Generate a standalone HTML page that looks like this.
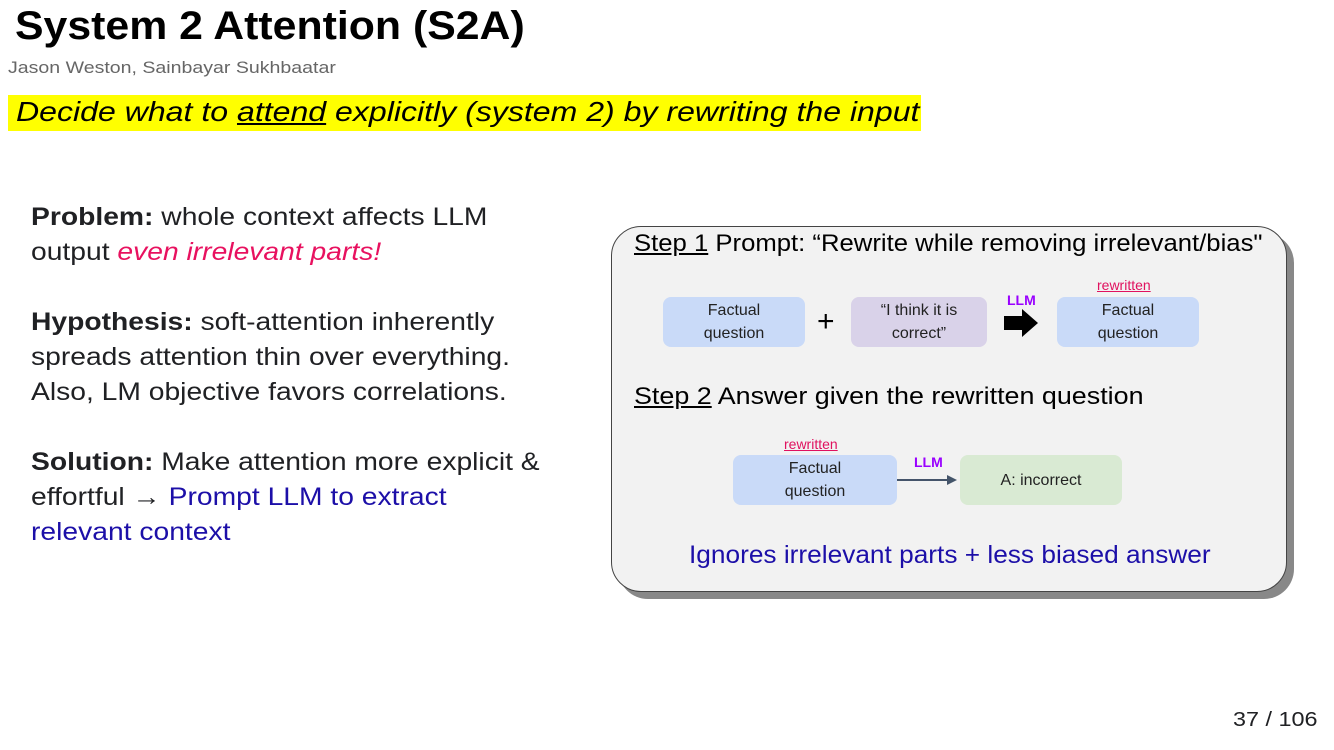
<!DOCTYPE html>
<html><head><meta charset="utf-8"><style>
body{margin:0;width:1334px;height:750px;background:#fff;position:relative;overflow:hidden;font-family:"Liberation Sans",sans-serif}
.a{position:absolute;white-space:nowrap}
.l{font-size:25px;color:#202124;line-height:35px;transform:scaleX(1.13);transform-origin:left}
.b{position:absolute;border-radius:8px;display:flex;align-items:center;justify-content:center;text-align:center;font-size:16px;line-height:23px;color:#222}
.bl{background:#c9daf8}.pu{background:#d9d2e9}.gr{background:#d9ead3}
.rw{position:absolute;font-size:14px;color:#e0115f;text-decoration:underline}
.llm{position:absolute;font-size:14px;font-weight:bold;color:#9900ff}
</style></head><body>
<div class="a" style="left:15px;top:4px;font-size:40px;font-weight:bold;color:#000;transform:scaleX(1.07);transform-origin:left">System 2 Attention (S2A)</div>
<div class="a" style="left:8px;top:58px;font-size:17px;color:#666;transform:scaleX(1.15);transform-origin:left">Jason Weston, Sainbayar Sukhbaatar</div>
<div class="a" style="left:8px;top:95px;width:913px;height:36px;background:#ffff00"></div>
<div class="a" style="left:16px;top:96px;font-size:28px;font-style:italic;color:#000;transform:scaleX(1.145);transform-origin:left">Decide what to <u>attend</u> explicitly (system 2) by rewriting the input</div>

<div class="a l" style="left:31px;top:200px"><b>Problem:</b> whole context affects LLM<br>output <i style="color:#e8115f">even irrelevant parts!</i><br><br><b>Hypothesis:</b> soft-attention inherently<br>spreads attention thin over everything.<br>Also, LM objective favors correlations.<br><br><b>Solution:</b> Make attention more explicit &amp;<br>effortful → <span style="color:#1c0fa8">Prompt LLM to extract<br>relevant context</span></div>

<div class="a" style="left:618px;top:233px;width:676px;height:366px;border-radius:30px;background:#888"></div>
<div class="a" style="left:611px;top:226px;width:674px;height:364px;border-radius:30px;background:#f2f2f2;border:1.5px solid #444"></div>
<div class="a" style="left:634px;top:230px;font-size:24px;color:#000;transform:scaleX(1.07);transform-origin:left"><u>Step 1</u> Prompt: “Rewrite while removing irrelevant/bias"</div>
<div class="b bl" style="left:663px;top:297px;width:142px;height:50px">Factual<br>question</div>
<div class="a" style="left:817px;top:305px;font-size:30px;color:#000">+</div>
<div class="b pu" style="left:851px;top:297px;width:136px;height:50px">“I think it is<br>correct”</div>
<div class="llm" style="left:1007px;top:292px">LLM</div>
<svg class="a" style="left:1002px;top:308px" width="38" height="30"><path d="M2 8h18V1l16 14-16 14v-7H2z" fill="#000"/></svg>
<div class="rw" style="left:1097px;top:277px">rewritten</div>
<div class="b bl" style="left:1057px;top:297px;width:142px;height:50px">Factual<br>question</div>
<div class="a" style="left:634px;top:383px;font-size:24px;color:#000;transform:scaleX(1.12);transform-origin:left"><u>Step 2</u> Answer given the rewritten question</div>
<div class="rw" style="left:784px;top:436px">rewritten</div>
<div class="b bl" style="left:733px;top:455px;width:164px;height:50px">Factual<br>question</div>
<div class="llm" style="left:914px;top:454px">LLM</div>
<svg class="a" style="left:897px;top:473px" width="64" height="14"><path d="M0 7h52" stroke="#44546a" stroke-width="2"/><path d="M50 2l10 5-10 5z" fill="#44546a"/></svg>
<div class="b gr" style="left:960px;top:455px;width:162px;height:50px">A: incorrect</div>
<div class="a" style="left:689px;top:541px;font-size:25px;color:#1c0fa8;transform:scaleX(1.05);transform-origin:left">Ignores irrelevant parts + less biased answer</div>

<div class="a" style="left:1233px;top:709px;font-size:20px;color:#202124;transform:scaleX(1.17);transform-origin:left">37 / 106</div>
</body></html>
